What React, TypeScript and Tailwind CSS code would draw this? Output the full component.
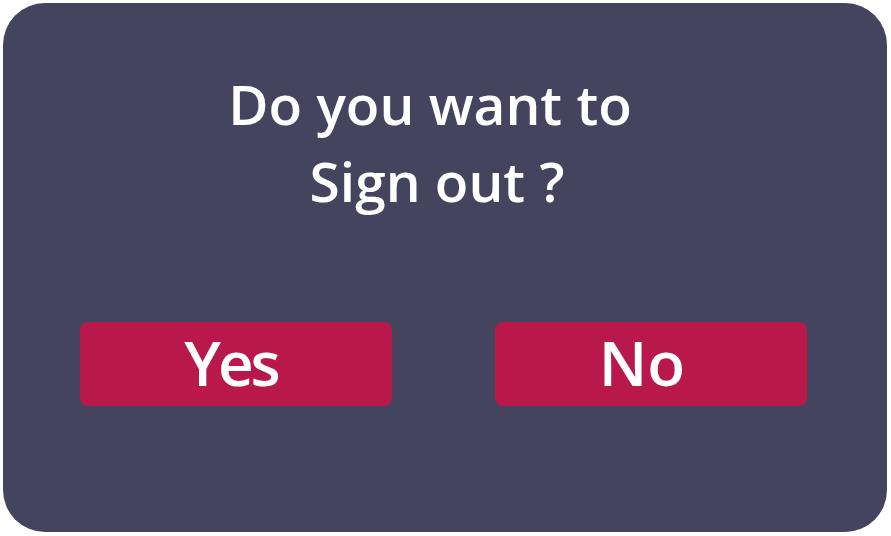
export default function App() {
  return (
    <div className="w-[891px] h-[536px] bg-white p-[3px] pr-[4px] pb-[4px]" style={{ fontFamily: '"Open Sans", sans-serif' }}>
      <div className="w-full h-full rounded-[42px] bg-[#45445f] flex flex-col">
        <div className="pt-[62px] pr-[30px] text-center text-white font-semibold text-[55px] leading-[77px]">
          <div>Do you want to</div>
          <div className="pl-[14px]">Sign out ?</div>
        </div>
        <div className="mt-[103px] flex justify-between pl-[77px] pr-[80px]">
          <button className="w-[312px] h-[84px] rounded-[8px] bg-[#b8184a] text-white font-semibold text-[62px] leading-none tracking-[-3px] pr-[10px] pb-[4px] flex items-center justify-center">Yes</button>
          <button className="w-[312px] h-[84px] rounded-[8px] bg-[#b8184a] text-white font-semibold text-[62px] leading-none pr-[18px] pb-[4px] flex items-center justify-center">No</button>
        </div>
      </div>
    </div>
  );
}
